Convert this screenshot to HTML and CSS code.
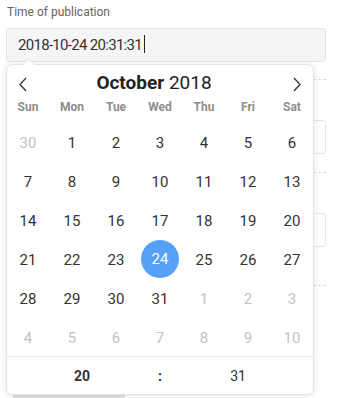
FILE: index.html
```html
<!DOCTYPE html>
<html lang="en">
<head>
    <meta charset="UTF-8">
    <meta name="viewport" content="width=device-width, initial-scale=1.0">
    <title>Time of publication</title>
    <link rel="stylesheet" href="styles.css">
</head>
<body>
    <div class="form">
        <div class="field-label">Time of publication</div>
        <div class="date-input">2018-10-24 20:31:31<span class="caret"></span></div>

        <div class="rule rule-first"></div>
        <div class="box box-first"></div>
        <div class="rule"></div>
        <div class="box"></div>
        <div class="rule rule-last"></div>
        <div class="gray-btn"><span class="btn-icon"></span></div>

        <div class="picker">
            <span class="picker-tip"></span>
            <div class="picker-head">
                <button class="nav-btn">
                    <svg width="10" height="15" viewBox="0 0 10 15"><path d="M8 1 L2 7.5 L8 14" fill="none" stroke="#333" stroke-width="1.3"/></svg>
                </button>
                <div class="picker-title"><b>October</b> 2018</div>
                <button class="nav-btn">
                    <svg width="10" height="15" viewBox="0 0 10 15"><path d="M2 1 L8 7.5 L2 14" fill="none" stroke="#333" stroke-width="1.3"/></svg>
                </button>
            </div>
            <div class="weekdays">
                <span>Sun</span><span>Mon</span><span>Tue</span><span>Wed</span><span>Thu</span><span>Fri</span><span>Sat</span>
            </div>
            <div class="days">
                <span class="muted">30</span><span>1</span><span>2</span><span>3</span><span>4</span><span>5</span><span>6</span>
                <span>7</span><span>8</span><span>9</span><span>10</span><span>11</span><span>12</span><span>13</span>
                <span>14</span><span>15</span><span>16</span><span>17</span><span>18</span><span>19</span><span>20</span>
                <span>21</span><span>22</span><span>23</span><span><i class="selected">24</i></span><span>25</span><span>26</span><span>27</span>
                <span>28</span><span>29</span><span>30</span><span>31</span><span class="muted">1</span><span class="muted">2</span><span class="muted">3</span>
                <span class="muted">4</span><span class="muted">5</span><span class="muted">6</span><span class="muted">7</span><span class="muted">8</span><span class="muted">9</span><span class="muted">10</span>
            </div>
            <div class="time-row">
                <span class="hour">20</span>
                <span class="colon">:</span>
                <span class="minute">31</span>
            </div>
        </div>
    </div>
</body>
</html>
```

FILE: styles.css
```css
body {
    margin: 0;
    background-color: #fff;
    font-family: Roboto, "Noto Sans", sans-serif;
    color: #333;
    overflow: hidden;
}

.form {
    position: relative;
    padding: 4px 11px 0 6px;
}

.field-label {
    font-size: 12px;
    line-height: 16px;
    color: #666;
    padding-left: 1px;
    margin-bottom: 8px;
}

.date-input {
    height: 32px;
    line-height: 32px;
    border: 1px solid #e6e6e6;
    border-radius: 3px;
    background-color: #f5f5f5;
    padding-left: 11px;
    font-size: 15px;
    letter-spacing: -0.7px;
    color: #333;
}

.caret {
    display: inline-block;
    width: 1px;
    height: 18px;
    margin-left: 2px;
    vertical-align: -3px;
    background-color: #222;
}

.rule {
    border-top: 1px dashed #dcdcdc;
    margin-top: 18px;
}

.rule-first {
    margin-top: 17px;
}

.box {
    height: 32px;
    border: 1px solid #e6e6e6;
    border-radius: 3px;
    margin-top: 40px;
}

.rule-last {
    margin-top: 38px;
}

.gray-btn {
    width: 112px;
    height: 30px;
    margin: 106px 0 0 7px;
    background-color: #e3e3e3;
    border-radius: 2px;
    position: relative;
}

.btn-icon {
    position: absolute;
    left: 55px;
    top: 1px;
    width: 12px;
    height: 3px;
    border-top: 2px solid #777;
}

.picker {
    position: absolute;
    left: 6px;
    top: 64px;
    width: 306px;
    height: 329px;
    background-color: #fff;
    border: 1px solid #e4e4e4;
    border-radius: 6px;
    box-shadow: 0 1px 6px rgba(0, 0, 0, 0.1);
}

.picker-tip {
    position: absolute;
    left: 17px;
    top: -5px;
    width: 8px;
    height: 8px;
    background-color: #fff;
    border-top: 1px solid #e4e4e4;
    border-left: 1px solid #e4e4e4;
    transform: rotate(45deg);
}

.picker-head {
    display: flex;
    align-items: center;
    height: 34px;
    padding: 0 11px;
}

.nav-btn {
    border: none;
    background: none;
    padding: 0;
    width: 10px;
    height: 15px;
    margin-top: 5px;
    display: flex;
}

.picker-title {
    flex: 1;
    text-align: center;
    font-size: 19px;
    padding-right: 12px;
    color: #222;
}

.picker-title b {
    font-weight: 700;
}

.weekdays {
    display: grid;
    grid-template-columns: repeat(7, 1fr);
    height: 16px;
    line-height: 16px;
    margin: 0 -1px 8px;
    font-size: 12px;
    font-weight: 700;
    color: #8e8e8e;
    text-align: center;
}

.days {
    display: grid;
    grid-template-columns: repeat(7, 1fr);
    grid-auto-rows: 39px;
    margin: 0 -1px;
    font-size: 15px;
    color: #333;
}

.days span {
    display: flex;
    align-items: center;
    justify-content: center;
}

.days .muted {
    color: #c2c2c2;
}

.selected {
    font-style: normal;
    width: 38px;
    height: 38px;
    line-height: 38px;
    margin-top: -2px;
    text-align: center;
    border-radius: 50%;
    background-color: #57a0f8;
    color: #fff;
}

.time-row {
    display: grid;
    grid-template-columns: repeat(3, 78px);
    justify-content: center;
    border-top: 1px solid #e4e4e4;
    height: 38px;
    line-height: 38px;
    margin: -1px -1px 0;
    font-size: 14px;
    text-align: center;
    color: #333;
}

.hour, .colon {
    font-weight: 700;
}
```
